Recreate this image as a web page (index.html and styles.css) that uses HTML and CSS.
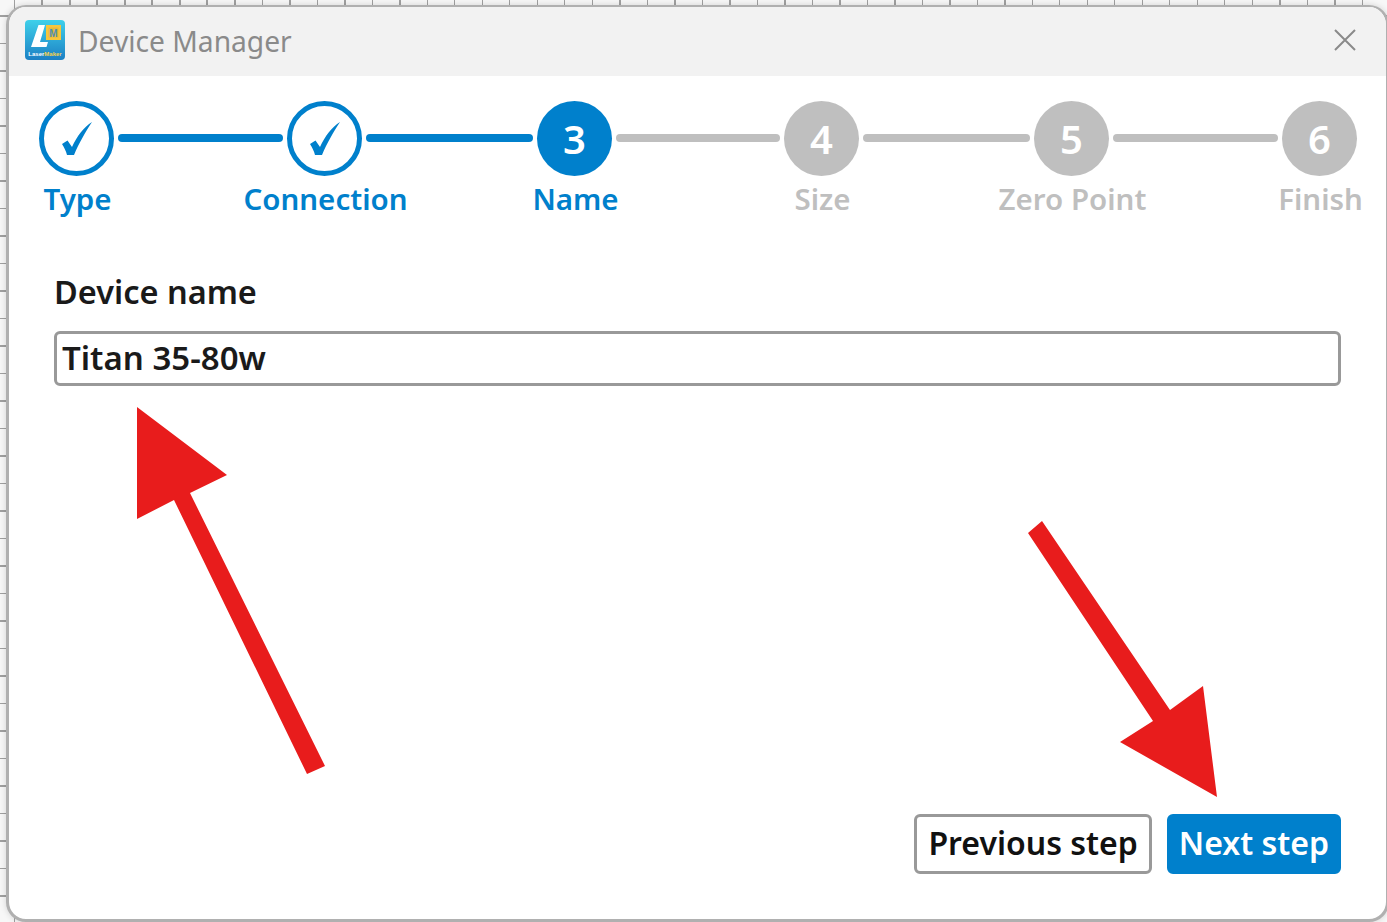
FILE: index.html
```html
<!DOCTYPE html>
<html>
<head>
  <link rel="stylesheet" href="styles.css">
</head>
<body>
  <div class="window">
    <div class="title-bar">
      <svg class="logo" width="40" height="40" viewBox="0 0 40 40">
        <defs>
          <linearGradient id="logoBg" x1="0" y1="0" x2="0" y2="1">
            <stop offset="0" stop-color="#3fd0ea"/>
            <stop offset="1" stop-color="#1c80c4"/>
          </linearGradient>
        </defs>
        <rect width="40" height="40" rx="4" fill="url(#logoBg)"/>
        <path d="M13.500 5 L20 5 L15 22 L23 22 L21.500 27 L6 27 Z" fill="#fff"/>
        <rect x="21" y="5" width="15" height="15" fill="#f7c63c"/>
        <rect x="23.500" y="7.500" width="10" height="10" fill="#e9b93a"/>
        <text x="28.500" y="16.500" font-size="10" font-weight="700" text-anchor="middle" fill="#4f8fb0" class="logo-text">M</text>
        <text x="20" y="35.500" font-size="6" font-weight="700" text-anchor="middle" fill="#fff" class="logo-text">Laser<tspan fill="#f7d24c">Maker</tspan></text>
      </svg>
      <span class="title">Device Manager</span>
      <svg class="close" width="22" height="22" viewBox="0 0 22 22">
        <path d="M1 1 L21 21 M21 1 L1 21" stroke="#8a8a8a" stroke-width="2" fill="none"/>
      </svg>
    </div>

    <div class="content">
      <div class="steps">
        <div class="step done">
          <div class="circle">
            <svg width="65" height="65" viewBox="5 5 65 65"><path d="M23 43 L28.500 39.500 L33 46 C38 35 45 26 53 21 C47 30 40 42 35 54 L28 54 C27 50 25 46 23 43 Z" fill="#0080cc"/></svg>
          </div>
          <div class="label">Type</div>
        </div>
        <div class="line active"></div>
        <div class="step done">
          <div class="circle">
            <svg width="65" height="65" viewBox="5 5 65 65"><path d="M23 43 L28.500 39.500 L33 46 C38 35 45 26 53 21 C47 30 40 42 35 54 L28 54 C27 50 25 46 23 43 Z" fill="#0080cc"/></svg>
          </div>
          <div class="label">Connection</div>
        </div>
        <div class="line active wide"></div>
        <div class="step current">
          <div class="circle">3</div>
          <div class="label">Name</div>
        </div>
        <div class="line narrow"></div>
        <div class="step">
          <div class="circle">4</div>
          <div class="label">Size</div>
        </div>
        <div class="line wide"></div>
        <div class="step">
          <div class="circle">5</div>
          <div class="label">Zero Point</div>
        </div>
        <div class="line"></div>
        <div class="step">
          <div class="circle">6</div>
          <div class="label">Finish</div>
        </div>
      </div>

      <div class="form">
        <label class="field-label">Device name</label>
        <div class="field">Titan 35-80w</div>
      </div>

      <div class="buttons">
        <button class="btn">Previous step</button>
        <button class="btn primary">Next step</button>
      </div>
    </div>

    <!-- red arrows drawn on top of the dialog -->
    <svg class="arrows" width="1387" height="922" viewBox="0 0 1387 922">
      <polygon points="137,407 227,475 190,493 325,766 307,774 174,500 137,519" fill="#e81c1c"/>
      <polygon points="1042,521 1170,710 1203,686 1217,797 1120,742 1153,721 1028,533" fill="#e81c1c"/>
    </svg>
  </div>
</body>
</html>
```

FILE: styles.css
```css
* {
  margin: 0;
  padding: 0;
  box-sizing: border-box;
}
html, body {
  height: 100%;
  overflow: hidden;
}
body {
  background-color: #f7f7f7;
  background-image:
    repeating-linear-gradient(to right, transparent 0, transparent 14px, #a0a0a0 14px, #a0a0a0 15.500px, transparent 15.500px, transparent 27.500px),
    repeating-linear-gradient(to bottom, transparent 0, transparent 15px, #a0a0a0 15px, #a0a0a0 16.500px, transparent 16.500px, transparent 27.500px);
  font-family: "Noto Sans", sans-serif;
  padding: 5px 0 0 6px;
}
.window {
  position: relative;
  width: 1383px;
  height: 917px;
  background: white;
  border: 3px solid #b0b0b0;
  border-top-width: 2px;
  border-radius: 20px;
  box-shadow: 0 0 6px rgba(0, 0, 0, 0.15);
  overflow: hidden;
  display: flex;
  flex-direction: column;
}
.title-bar {
  display: flex;
  align-items: center;
  height: 69px;
  flex-shrink: 0;
  padding: 0 30px 4px 16px;
  background: #f2f2f2;
}
.title {
  margin: 3px 0 0 13px;
  font-size: 28.200px;
  color: #8a8a8a;
}
.logo-text {
  font-family: "Liberation Sans", sans-serif;
}
.close {
  margin-left: auto;
}
.content {
  flex: 1;
  display: flex;
  flex-direction: column;
  padding-bottom: 45px;
}
.steps {
  display: flex;
  padding: 25px 0 0 30px;
}
.step {
  width: 75px;
  display: flex;
  flex-direction: column;
  align-items: center;
  flex-shrink: 0;
}
.circle {
  width: 75px;
  height: 75px;
  border-radius: 50%;
  background: #bfbfbf;
  color: white;
  font-size: 40px;
  font-weight: 600;
  display: flex;
  align-items: center;
  justify-content: center;
}
.step.current .circle {
  background: #0080cc;
}
.step.done .circle {
  background: white;
  border: 5px solid #0080cc;
}
.step.done svg {
  flex-shrink: 0;
}
.label {
  margin-top: 3px;
  padding-left: 2px;
  white-space: nowrap;
  font-size: 29.500px;
  line-height: 40px;
  font-weight: 600;
  color: #bfbfbf;
}
.step.done .label,
.step.current .label {
  color: #0080cc;
}
.line {
  width: 165px;
  flex-shrink: 0;
  height: 8px;
  margin: 33px 4px 0;
  border-radius: 4px;
  background: #bfbfbf;
}
.line.wide {
  width: 167px;
}
.line.narrow {
  width: 164px;
}
.line.active {
  background: #0080cc;
}
.form {
  padding: 52px 45px 0;
}
.field-label {
  display: block;
  font-size: 32.500px;
  line-height: 42px;
  font-weight: 600;
  color: #1a1a1a;
}
.field {
  margin-top: 18px;
  height: 55px;
  border: 3px solid #999;
  border-radius: 6px;
  padding: 0 5px;
  font-size: 33px;
  line-height: 47px;
  font-weight: 600;
  color: #1a1a1a;
}
.buttons {
  margin-top: auto;
  padding-right: 45px;
  display: flex;
  justify-content: flex-end;
  gap: 15px;
}
.btn {
  height: 60px;
  padding: 0 11px 4px;
  border: 3px solid #999;
  border-radius: 6px;
  background: white;
  font-family: "Noto Sans", sans-serif;
  font-size: 32px;
  font-weight: 600;
  color: #111;
}
.btn.primary {
  padding: 0 9px 4px;
  background: #0080cc;
  border-color: #0080cc;
  color: white;
}
.arrows {
  position: absolute;
  left: -9px;
  top: -7px;
}
```
